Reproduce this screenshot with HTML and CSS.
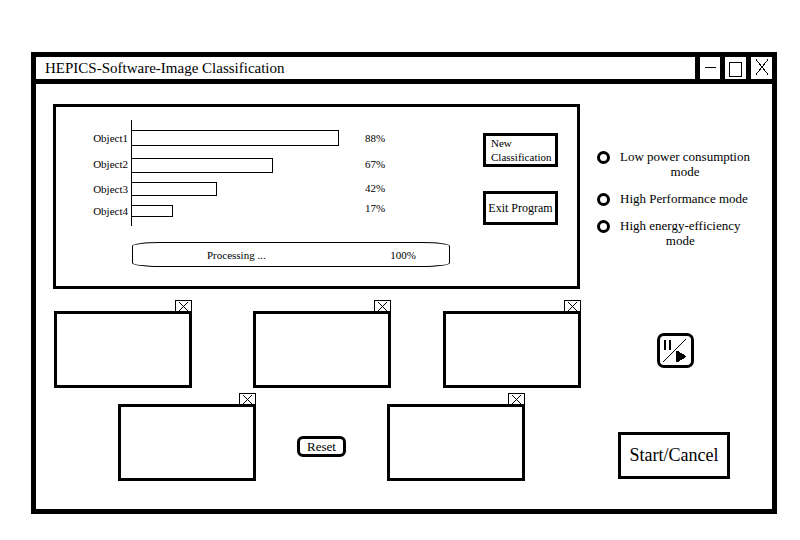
FILE: index.html
```html
<!DOCTYPE html>
<html lang="en">
<head>
<meta charset="utf-8">
<title>HEPICS-Software-Image Classification</title>
<link rel="stylesheet" href="styles.css">
</head>
<body>
<main class="window">
  <header class="titlebar">
    <h1 class="title">HEPICS-Software-Image Classification</h1>
    <button class="win-btn" type="button" aria-label="Minimize">
      <svg width="20" height="22" viewBox="0 0 20 22"><path d="M5 10.500H16"/></svg>
    </button>
    <button class="win-btn" type="button" aria-label="Maximize">
      <svg width="21" height="22" viewBox="0 0 21 22"><rect x="4.500" y="5.500" width="12" height="14"/></svg>
    </button>
    <button class="win-btn" type="button" aria-label="Close">
      <svg width="21" height="22" viewBox="0 0 21 22"><path d="M5 2.500L17 17.500M17 2.500L5 17.500"/></svg>
    </button>
  </header>

  <div class="content">
    <div class="left">
      <section class="panel">
        <div class="results">
          <div class="chart">
            <ul class="labels">
              <li>Object1</li><li>Object2</li><li>Object3</li><li>Object4</li>
            </ul>
            <div class="plot">
              <div class="bar" style="width:89%"></div>
              <div class="bar" style="width:60.500%"></div>
              <div class="bar" style="width:36.500%"></div>
              <div class="bar" style="width:17.500%"></div>
            </div>
            <ul class="values">
              <li>88%</li><li>67%</li><li>42%</li><li>17%</li>
            </ul>
          </div>
          <div class="progress"><span>Processing ...</span><span>100%</span></div>
        </div>
        <div class="actions">
          <button class="btn btn-new" type="button">New Classification</button>
          <button class="btn btn-exit" type="button">Exit Program</button>
        </div>
      </section>

      <section class="thumbs">
        <div class="thumb">
          <button class="thumb-close" type="button" aria-label="Close image 1"><svg width="15" height="10" viewBox="0 0 15 10"><path d="M3 1L12 10M12 1L3 10"/></svg></button>
          <div class="frame"></div>
        </div>
        <div class="thumb">
          <button class="thumb-close" type="button" aria-label="Close image 2"><svg width="15" height="10" viewBox="0 0 15 10"><path d="M3 1L12 10M12 1L3 10"/></svg></button>
          <div class="frame"></div>
        </div>
        <div class="thumb">
          <button class="thumb-close" type="button" aria-label="Close image 3"><svg width="15" height="10" viewBox="0 0 15 10"><path d="M3 1L12 10M12 1L3 10"/></svg></button>
          <div class="frame"></div>
        </div>
      </section>

      <section class="thumbs-lower">
        <div class="thumb">
          <button class="thumb-close" type="button" aria-label="Close image 4"><svg width="15" height="10" viewBox="0 0 15 10"><path d="M3 1L12 10M12 1L3 10"/></svg></button>
          <div class="frame"></div>
        </div>
        <button class="reset" type="button">Reset</button>
        <div class="thumb">
          <button class="thumb-close" type="button" aria-label="Close image 5"><svg width="15" height="10" viewBox="0 0 15 10"><path d="M3 1L12 10M12 1L3 10"/></svg></button>
          <div class="frame"></div>
        </div>
      </section>
    </div>

    <aside class="right">
      <div class="modes" role="radiogroup" aria-label="Mode">
        <label class="mode"><input type="radio" name="mode"><span>Low power consumption<br>mode</span></label>
        <label class="mode"><input type="radio" name="mode"><span>High Performance mode</span></label>
        <label class="mode"><input type="radio" name="mode"><span>High energy-efficiency<br>mode</span></label>
      </div>
      <button class="toggle" type="button" aria-label="Pause or play">
        <svg width="31" height="29" viewBox="0 0 31 29">
          <path class="solid" d="M4 4h2v10H4zM9 4h2v10H9zM16 15h2L26 20v1L18 26h-2z"/>
          <path d="M3 26L26 3"/>
        </svg>
      </button>
      <button class="start" type="button">Start/Cancel</button>
    </aside>
  </div>
</main>
</body>
</html>
```
FILE: styles.css
```css
* {
  box-sizing: border-box;
}

body {
  margin: 0;
  background: #fff;
  color: #000;
  font-family: "Liberation Serif", "Times New Roman", serif;
  font-size: 12px;
}

button {
  margin: 0;
  padding: 0;
  border: 3px solid #000;
  background: #fff;
  color: #000;
  font: inherit;
}

ul {
  margin: 0;
  padding: 0;
  list-style: none;
}

svg {
  display: block;
  fill: none;
  stroke: #000;
  shape-rendering: crispEdges;
}

.solid {
  fill: #000;
  stroke: none;
}

.window {
  margin: 52px 23px 26px 31px;
  border: 5px solid #000;
}

.titlebar {
  display: flex;
  border-bottom: 5px solid #000;
}

.title {
  flex: 1;
  margin: 0;
  padding-left: 9px;
  font-size: 15px;
  font-weight: normal;
  line-height: 22px;
}

.win-btn {
  border-width: 0 0 0 5px;
}

.content {
  display: grid;
  grid-template-columns: minmax(0, 1fr) 192px;
}

.left {
  padding: 20px 0 27px 17px;
}

.panel {
  display: flex;
  justify-content: space-between;
  padding: 13px 19px 19px 0;
  border: 3px solid #000;
}

.results {
  flex: 1;
  max-width: 394px;
}

.chart {
  display: grid;
  grid-template-columns: 75px minmax(0, 1fr) 85px;
}

.labels,
.plot,
.values {
  display: grid;
  grid-template-rows: 16px 18px 14px 12px;
  row-gap: 9px;
  align-items: end;
  padding: 10px 0 9px;
}

.labels {
  align-items: center;
  padding-right: 3px;
  text-align: right;
}

.labels,
.values {
  font-size: 11px;
  line-height: 15px;
}

.labels li {
  height: 12px;
  line-height: 12px;
}

.values {
  grid-template-rows: 16px 17px 15px 11px;
}

.plot {
  border-left: 1px solid #000;
}

.bar {
  height: 100%;
  border: 1px solid #000;
  border-left: 0;
}

.bar:nth-child(2) {
  height: 15px;
}

.progress {
  display: flex;
  justify-content: space-between;
  margin: 16px 0 0 76px;
  padding: 2px 33px 0 74px;
  border: 1px solid #000;
  border-radius: 28px / 4px;
  font-size: 11px;
  line-height: 21px;
}

.actions {
  display: flex;
  flex-direction: column;
  gap: 24px;
  width: 75px;
  padding-top: 13px;
}

.btn {
  height: 34px;
  font-size: 11px;
  line-height: 14px;
}

.btn-new {
  padding-left: 5px;
  text-align: left;
}

.btn-exit {
  font-size: 12px;
  white-space: nowrap;
}

.thumbs {
  display: grid;
  grid-template-columns: 199fr 190fr 138px;
  margin: 11px -1px 5px 1px;
}

.thumbs-lower {
  display: flex;
  gap: 41px;
  padding-left: 65px;
}

.thumb {
  display: flex;
  flex-direction: column;
  width: 138px;
}

.thumb-close {
  align-self: flex-end;
  border-width: 1px 1px 0;
}

.frame {
  height: 77px;
  border: 3px solid #000;
}

.reset {
  align-self: flex-start;
  width: 49px;
  height: 21px;
  margin-top: 43px;
  border-radius: 6px;
  font-size: 13px;
  line-height: 15px;
}

.right {
  padding: 65px 0 30px 17px;
}

.modes {
  display: grid;
  gap: 12px;
}

.mode {
  display: flex;
  align-items: flex-start;
  gap: 10px;
  font-size: 13px;
  line-height: 15px;
  text-align: center;
  white-space: nowrap;
}

.mode input {
  appearance: none;
  width: 13px;
  height: 13px;
  margin: 2px 0 0;
  border: 3px solid #000;
  border-radius: 50%;
}

.mode input:checked {
  background: #000;
}

.toggle {
  display: block;
  margin: 85px 0 64px 60px;
  border-radius: 7px;
}

.start {
  display: block;
  width: 112px;
  height: 47px;
  margin-left: 21px;
  font-size: 18px;
}
```
